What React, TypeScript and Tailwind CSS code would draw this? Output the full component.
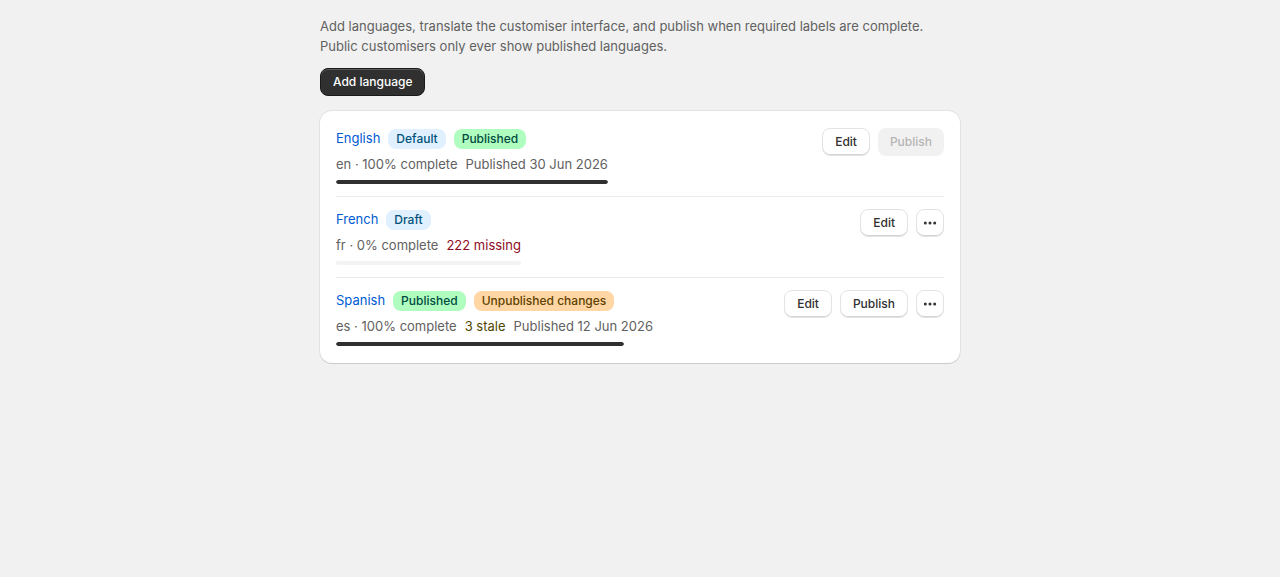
import { MoreHorizontal } from 'lucide-react';

type Badge = { label: string; tone: 'info' | 'success' | 'attention' };

type Language = {
  name: string;
  code: string;
  percent: number;
  badges: Badge[];
  extra?: { text: string; className: string };
  published?: string;
  actions: 'default' | 'draft' | 'changes';
};

const languages: Language[] = [
  {
    name: 'English',
    code: 'en',
    percent: 100,
    badges: [
      { label: 'Default', tone: 'info' },
      { label: 'Published', tone: 'success' },
    ],
    published: 'Published 30 Jun 2026',
    actions: 'default',
  },
  {
    name: 'French',
    code: 'fr',
    percent: 0,
    badges: [{ label: 'Draft', tone: 'info' }],
    extra: { text: '222 missing', className: 'text-[#8e0b21]' },
    actions: 'draft',
  },
  {
    name: 'Spanish',
    code: 'es',
    percent: 100,
    badges: [
      { label: 'Published', tone: 'success' },
      { label: 'Unpublished changes', tone: 'attention' },
    ],
    extra: { text: '3 stale', className: 'text-[#4f4700]' },
    published: 'Published 12 Jun 2026',
    actions: 'changes',
  },
];

const toneClass: Record<Badge['tone'], string> = {
  info: 'bg-[#e0f0ff] text-[#00527c]',
  success: 'bg-[#affebf] text-[#014b40]',
  attention: 'bg-[#ffd6a4] text-[#5e4200]',
};

const btn =
  'h-7 rounded-lg bg-white border border-[#e3e3e3] shadow-[inset_0_-1px_0_#d4d4d4] text-[12px] font-medium text-[#303030]';

function LanguageRow({ lang, last }: { lang: Language; last: boolean }) {
  return (
    <div className={`flex items-start justify-between pt-3 ${last ? '' : 'pb-3 border-b border-[#ebebeb]'}`}>
      <div className="flex flex-col w-fit">
        <div className="flex items-center gap-2 h-5 mt-px">
          <span className="text-[13px] text-[#005bd3]">{lang.name}</span>
          {lang.badges.map((b) => (
            <span
              key={b.label}
              className={`h-5 px-2 rounded-lg text-[12px] font-medium leading-5 ${toneClass[b.tone]}`}
            >
              {b.label}
            </span>
          ))}
        </div>
        <div className="flex gap-2 mt-[5px] text-[13px] leading-5 text-[#616161]">
          <span>
            {lang.code} · {lang.percent}% complete
          </span>
          {lang.extra && <span className={lang.extra.className}>{lang.extra.text}</span>}
          {lang.published && <span>{lang.published}</span>}
        </div>
        {/* progress bar is capped at 288px */}
        <div className="mt-1.5 h-1 w-full max-w-[288px] rounded-full bg-[#f3f3f3] overflow-hidden">
          <div className="h-full rounded-full bg-[#303030]" style={{ width: `${lang.percent}%` }} />
        </div>
      </div>
      <div className="flex items-center gap-2">
        <button className={`${btn} px-3`}>Edit</button>
        {lang.actions === 'default' && (
          <button className="h-7 px-3 rounded-lg bg-[#f1f1f1] text-[12px] font-medium text-[#b5b5b5]">
            Publish
          </button>
        )}
        {lang.actions === 'changes' && <button className={`${btn} px-3`}>Publish</button>}
        {lang.actions !== 'default' && (
          <button className={`${btn} w-7 flex items-center justify-center`}>
            <MoreHorizontal className="w-4 h-4" strokeWidth={2.5} />
          </button>
        )}
      </div>
    </div>
  );
}

export default function App() {
  return (
    <div className="min-h-[577px] bg-[#f1f1f1] font-['Inter',sans-serif]">
      <div className="w-[640px] mx-auto pt-4">
        <p className="text-[13px] leading-5 text-[#616161]">
          Add languages, translate the customiser interface, and publish when required labels are complete.
          <br />
          Public customisers only ever show published languages.
        </p>
        <button className="mt-3 h-7 px-3 rounded-lg bg-[#303030] border border-[#1a1a1a] shadow-[inset_0_1px_0_rgba(255,255,255,0.2)] text-[12px] font-medium text-white">
          Add language
        </button>
        <div className="mt-[15px] bg-white rounded-xl shadow-[0_0_0_1px_rgba(0,0,0,0.06),0_1px_0_rgba(0,0,0,0.1)] px-4 pt-[5px] pb-[17px]">
          {languages.map((l, i) => (
            <LanguageRow key={l.name} lang={l} last={i === languages.length - 1} />
          ))}
        </div>
      </div>
    </div>
  );
}
